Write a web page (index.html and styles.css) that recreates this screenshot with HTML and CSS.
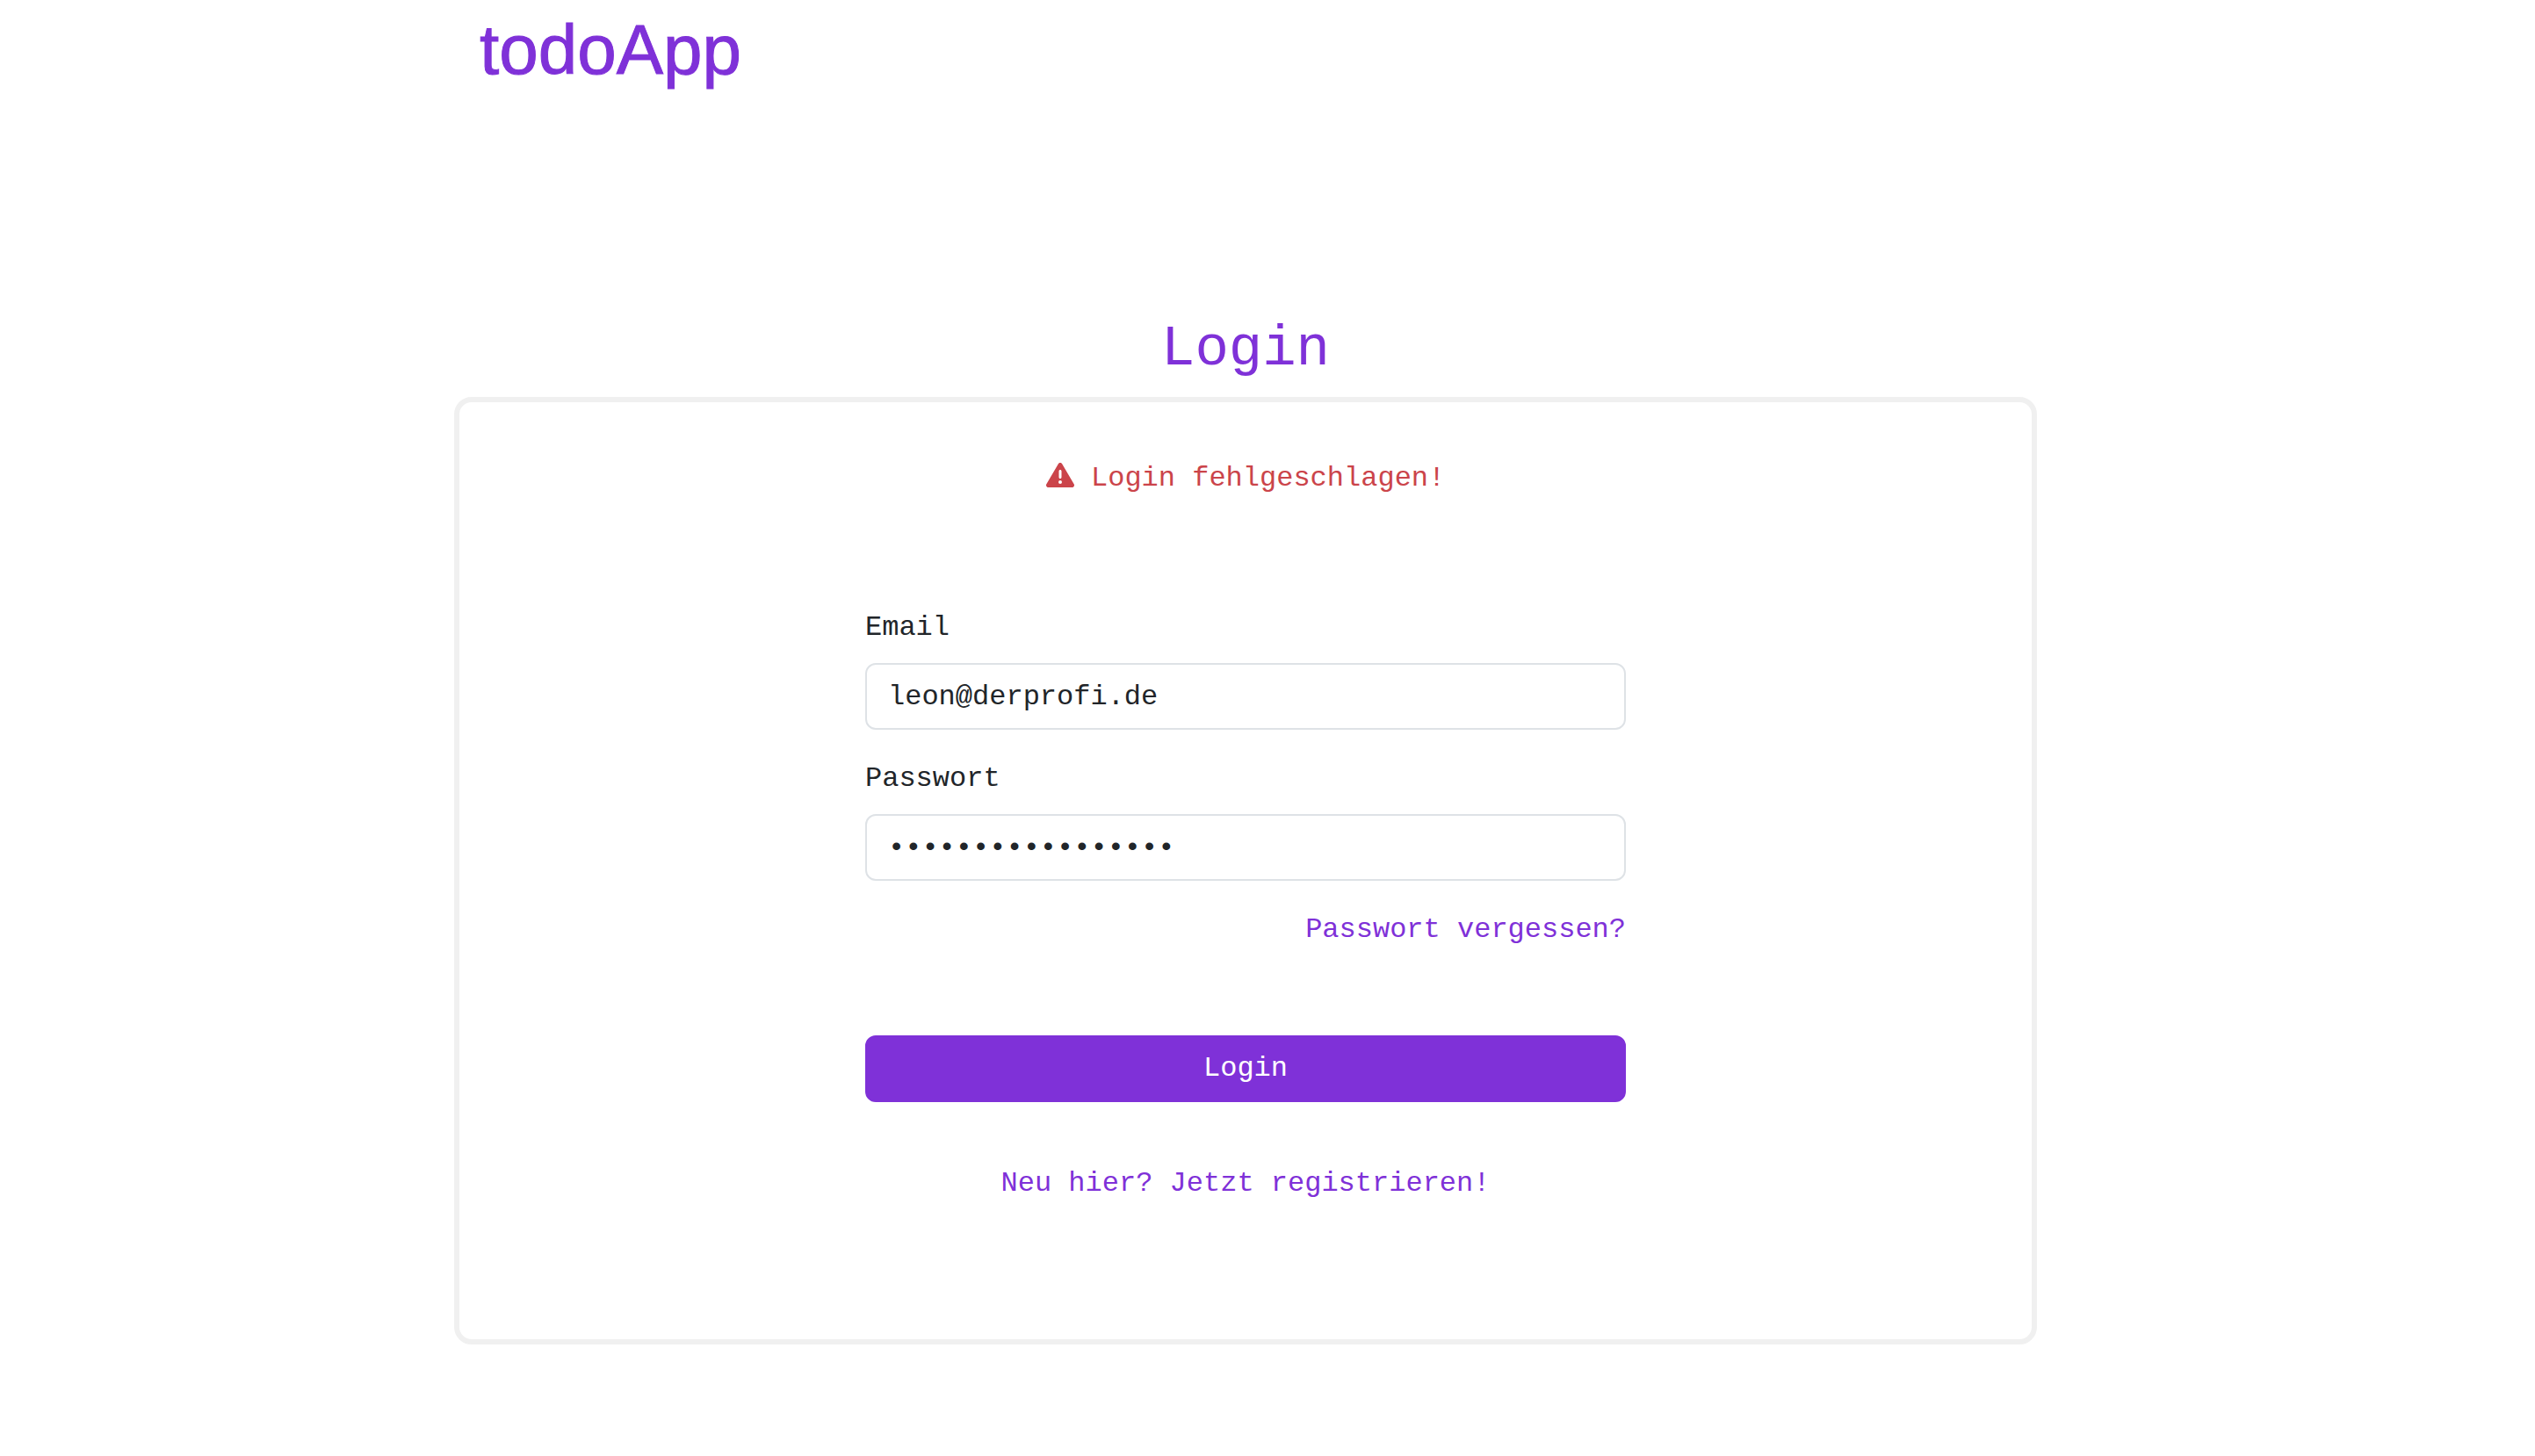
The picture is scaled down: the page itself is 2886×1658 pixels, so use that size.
FILE: index.html
```html
<!DOCTYPE html>
<html lang="de">
<head>
<meta charset="utf-8">
<meta name="viewport" content="width=device-width, initial-scale=1">
<title>todoApp – Login</title>
<link rel="stylesheet" href="styles.css">
</head>
<body>
<div class="page">
  <header class="header">
    <a class="brand" href="#">todoApp</a>
  </header>
  <main>
    <h1 class="title">Login</h1>
    <section class="card">
      <p class="alert" role="alert"><svg class="alert-icon" viewBox="0 0 512 512" aria-hidden="true"><path fill="currentColor" d="M256 32c14.2 0 27.3 7.5 34.5 19.8l216 368c7.3 12.4 7.3 27.7 .2 40.1S486.3 480 472 480H40c-14.3 0-27.6-7.7-34.7-20.1s-7-27.8 .2-40.1l216-368C228.7 39.5 241.8 32 256 32zm0 128c-13.3 0-24 10.7-24 24V296c0 13.3 10.7 24 24 24s24-10.7 24-24V184c0-13.3-10.7-24-24-24zm32 224a32 32 0 1 0 -64 0 32 32 0 1 0 64 0z"/></svg> Login fehlgeschlagen!</p>
      <form class="form">
        <div class="field">
          <label for="email">Email</label>
          <input class="input" id="email" type="email" value="leon@derprofi.de">
        </div>
        <div class="field">
          <label for="password">Passwort</label>
          <input class="input" id="password" type="password" value="passwortpasswort1">
        </div>
        <a class="link forgot" href="#">Passwort vergessen?</a>
        <button class="button" type="submit">Login</button>
      </form>
      <a class="link" href="#">Neu hier? Jetzt registrieren!</a>
    </section>
  </main>
</div>
</body>
</html>
```
FILE: styles.css
```css
:root {
  --accent: #7f31d8;
  --danger: #cb444a;
  --text: #212529;
}

* {
  box-sizing: border-box;
}

body {
  margin: 0;
  background: #fff;
  color: var(--text);
  font: 32px/48px "Liberation Mono", "Courier New", monospace;
}

.page {
  max-width: 1852px;
  margin: 0 auto;
  padding-right: 50px;
}

.header {
  padding: 9px 29px 8px;
}

.brand {
  color: var(--accent);
  font: 80px/96px "Liberation Sans", Arial, sans-serif;
  text-decoration: none;
  -webkit-text-stroke: 1px var(--accent);
}

.title {
  margin: 247px 0 16px;
  color: var(--accent);
  font-size: 64px;
  font-weight: 400;
  line-height: 76px;
  text-align: center;
}

.card {
  display: flex;
  flex-direction: column;
  align-items: center;
  padding: 63px 32px 153px;
  border: 6px solid #f0f0f0;
  border-radius: 20px;
}

.alert {
  margin: 0 0 122px;
  color: var(--danger);
}

.alert-icon {
  width: 32px;
  height: 32px;
  vertical-align: -4px;
}

.form {
  display: flex;
  flex-direction: column;
  gap: 32px;
  width: 100%;
  max-width: 866px;
  margin-bottom: 69px;
}

.field {
  display: flex;
  flex-direction: column;
  gap: 16px;
}

.input {
  width: 100%;
  height: 76px;
  padding: 12px 24px;
  border: 2px solid #dee2e6;
  border-radius: 12px;
  background: #fff;
  color: inherit;
  font: inherit;
}

.link {
  color: var(--accent);
  text-decoration: none;
}

.forgot {
  align-self: flex-end;
  margin-bottom: 64px;
}

.button {
  padding: 12px 24px;
  border: 2px solid var(--accent);
  border-radius: 12px;
  background: var(--accent);
  color: #fff;
  font: inherit;
}
```
